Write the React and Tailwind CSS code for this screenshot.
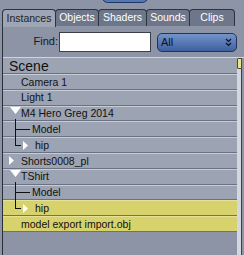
import React from 'react'

const tabs = [
  { name: 'Instances', w: 54, active: true },
  { name: 'Objects', w: 44 },
  { name: 'Shaders', w: 49 },
  { name: 'Sounds', w: 44 },
  { name: 'Clips', w: 46 },
]

function Down() {
  return <polygon points="7,1 18,1 12.5,8" fill="#fff" />
}

function Right({ x }) {
  return <polygon points={`${x},3 ${x + 5},7.5 ${x},12`} fill="#fff" />
}

// tree rows: indent is where the text begins, measured from the row's left edge
const rows = [
  { label: 'Camera 1', indent: 18 },
  { label: 'Light 1', indent: 18 },
  { label: 'M4 Hero Greg 2014', indent: 18, draw: <Down /> },
  {
    label: 'Model',
    indent: 29,
    draw: (
      <>
        <line x1="12.5" y1="-3" x2="12.5" y2="19" stroke="#111" />
        <line x1="12" y1="7.5" x2="27" y2="7.5" stroke="#111" />
      </>
    ),
  },
  {
    label: 'hip',
    indent: 32,
    draw: (
      <>
        <line x1="12.5" y1="-3" x2="12.5" y2="7.5" stroke="#111" />
        <line x1="12" y1="7.5" x2="18" y2="7.5" stroke="#111" />
        <Right x={20} />
      </>
    ),
  },
  { label: 'Shorts0008_pl', indent: 18, draw: <Right x={6} /> },
  { label: 'TShirt', indent: 18, draw: <Down /> },
  {
    label: 'Model',
    indent: 29,
    draw: (
      <>
        <line x1="12.5" y1="-3" x2="12.5" y2="19" stroke="#111" />
        <line x1="12" y1="7.5" x2="27" y2="7.5" stroke="#111" />
      </>
    ),
  },
  {
    label: 'hip',
    indent: 32,
    yellow: true,
    draw: (
      <>
        <line x1="12.5" y1="-3" x2="12.5" y2="7.5" stroke="#111" />
        <line x1="12" y1="7.5" x2="18" y2="7.5" stroke="#111" />
        <Right x={20} />
      </>
    ),
  },
  { label: 'model export import.obj', indent: 18, yellow: true },
]

export default function App() {
  return (
    <div className="relative w-[244px] h-[255px] overflow-hidden bg-[#8c94a6] font-['Liberation_Sans',Arial,sans-serif] flex flex-col">
      {/* clipped button above the tabs */}
      <div className="absolute left-[102px] top-[-8px] w-[46px] h-[11px] rounded-md bg-[#5577b2] border border-[#1f3566]" />

      {/* Tabs */}
      <div className="flex pt-[9px] pl-[2px] h-[26px] shrink-0">
        {tabs.map(t => (
          <div
            key={t.name}
            style={{ width: t.w }}
            className={
              'h-[17px] flex items-center justify-center text-[10.5px] border border-b-0 border-[#2d323f] rounded-t-[4px] -mr-px ' +
              (t.active ? 'bg-[#9ea5b4] text-[#1c1f26] relative z-10 h-[18px]' : 'bg-[#6e768a] text-white')
            }
          >
            {t.name}
          </div>
        ))}
      </div>

      <div className="ml-[2px] border-l border-[#2b2f3a] flex-1 flex flex-col">
        {/* Find row */}
        <div className="h-[31px] flex items-center shrink-0">
          <span className="w-[56px] text-right text-[11px] text-[#15181e] pr-px">Find:</span>
          <div className="w-[92px] h-[20px] bg-white border border-[#3b3f48] mt-[1px]" />
          <div className="ml-[6px] w-[80px] h-[19px] mt-[2px] rounded-[5px] border border-[#22345c] bg-gradient-to-b from-[#7394cb] to-[#3e609e] flex items-center pl-[3px] pr-[4px]">
            <span className="text-[11px] text-[#0d1220]">All</span>
            <svg width="7" height="9" viewBox="0 0 7 9" className="ml-auto">
              <polyline points="1,1 3.5,3.5 6,1" fill="none" stroke="#0d1220" strokeWidth="1.2" />
              <polyline points="1,5 3.5,7.5 6,5" fill="none" stroke="#0d1220" strokeWidth="1.2" />
            </svg>
          </div>
        </div>

        <div className="flex flex-1 border-t border-[#cfd4de]">
          {/* List */}
          <div className="w-[234px] flex flex-col">
            <div className="h-[16px] flex items-center bg-[#9ca3b2] border-b border-[#6a7182] pl-[6px] text-[14px] leading-none text-[#111]">
              Scene
            </div>
            {rows.map((r, i) => (
              <div
                key={i}
                className={
                  'h-[15.8px] flex items-center border-t border-b text-[10.5px] leading-none text-[#111] ' +
                  (r.yellow
                    ? 'bg-[#d8d26c] border-t-[#e6e29a] border-b-[#6e7080]'
                    : 'bg-[#9ca3b2] border-t-[#c6cbd6] border-b-[#6a7182]')
                }
              >
                <svg width={r.indent} height="15" viewBox={`0 0 ${r.indent} 15`} className="shrink-0 overflow-visible">
                  {r.draw}
                </svg>
                <span>{r.label}</span>
              </div>
            ))}
          </div>

          {/* Scrollbar */}
          <div className="relative w-[5px] bg-[#d3d7df] border-r border-[#3a3e48]">
            <div className="absolute left-0 top-0 w-[5px] h-[11px] bg-[#e8e48a] border border-[#4a4a30] rounded-[1px]" />
          </div>
        </div>
      </div>
    </div>
  )
}
